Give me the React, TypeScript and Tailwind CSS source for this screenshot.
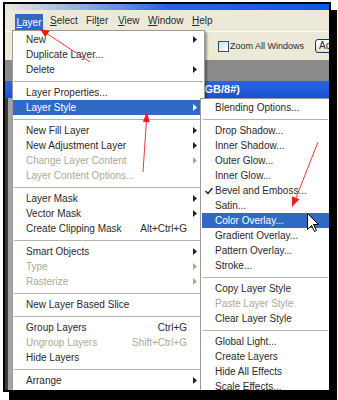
import React from "react";

const FONT = { fontFamily: '"Liberation Sans", Arial, sans-serif' };

type Item = {
  t?: string;
  sc?: string;
  sub?: boolean;
  dis?: boolean;
  hi?: boolean;
  sep?: boolean;
  check?: boolean;
};

const mainItems: Item[] = [
  { t: "New", sub: true },
  { t: "Duplicate Layer..." },
  { t: "Delete", sub: true },
  { sep: true },
  { t: "Layer Properties..." },
  { t: "Layer Style", sub: true, hi: true },
  { sep: true },
  { t: "New Fill Layer", sub: true },
  { t: "New Adjustment Layer", sub: true },
  { t: "Change Layer Content", sub: true, dis: true },
  { t: "Layer Content Options...", dis: true },
  { sep: true },
  { t: "Layer Mask", sub: true },
  { t: "Vector Mask", sub: true },
  { t: "Create Clipping Mask", sc: "Alt+Ctrl+G" },
  { sep: true },
  { t: "Smart Objects", sub: true },
  { t: "Type", sub: true, dis: true },
  { t: "Rasterize", sub: true, dis: true },
  { sep: true },
  { t: "New Layer Based Slice" },
  { sep: true },
  { t: "Group Layers", sc: "Ctrl+G" },
  { t: "Ungroup Layers", sc: "Shift+Ctrl+G", dis: true },
  { t: "Hide Layers" },
  { sep: true },
  { t: "Arrange", sub: true },
  { t: "Align Layers To Selection", sub: true },
];

const subItems: Item[] = [
  { t: "Blending Options..." },
  { sep: true },
  { t: "Drop Shadow..." },
  { t: "Inner Shadow..." },
  { t: "Outer Glow..." },
  { t: "Inner Glow..." },
  { t: "Bevel and Emboss...", check: true },
  { t: "Satin..." },
  { t: "Color Overlay...", hi: true },
  { t: "Gradient Overlay..." },
  { t: "Pattern Overlay..." },
  { t: "Stroke..." },
  { sep: true },
  { t: "Copy Layer Style" },
  { t: "Paste Layer Style", dis: true },
  { t: "Clear Layer Style" },
  { sep: true },
  { t: "Global Light..." },
  { t: "Create Layers" },
  { t: "Hide All Effects" },
  { t: "Scale Effects..." },
];

function Arrow({ color }: { color: string }) {
  return (
    <svg width="4" height="7" viewBox="0 0 4 7" className="block">
      <path d="M0 0 L4 3.5 L0 7 Z" fill={color} />
    </svg>
  );
}

function MainRow({ it }: { it: Item }) {
  if (it.sep)
    return (
      <div className="h-[8px] flex items-center px-[1px]">
        <div className="h-px w-full bg-[#b5b2a8]" />
      </div>
    );
  const txt = it.hi ? "text-white" : it.dis ? "text-[#aca899]" : "text-[#2a2a2a]";
  const arrowColor = it.hi ? "#ffffff" : it.dis ? "#aca899" : "#222222";
  return (
    <div
      className={`h-[15px] flex items-center pl-[13px] pr-[7px] text-[10px] leading-none whitespace-nowrap ${txt} ${
        it.hi ? "bg-[#316ac5]" : ""
      }`}
    >
      <span className="flex-1">{it.t}</span>
      {it.sc && <span>{it.sc}</span>}
      <span className="ml-[6px] w-[4px] flex items-center">
        {it.sub && <Arrow color={arrowColor} />}
      </span>
    </div>
  );
}

function SubRow({ it }: { it: Item }) {
  if (it.sep)
    return (
      <div className="h-[8px] flex items-center pl-[2px] pr-[2px]">
        <div className="h-px w-full bg-[#b5b2a8]" />
      </div>
    );
  const txt = it.hi ? "text-white" : it.dis ? "text-[#aca899]" : "text-[#2a2a2a]";
  return (
    <div
      className={`relative h-[15px] flex items-center pl-[14px] text-[10px] leading-none whitespace-nowrap ${txt} ${
        it.hi ? "bg-[#316ac5] ml-[1px]" : ""
      }`}
    >
      {it.check && (
        <svg width="8" height="8" viewBox="0 0 8 8" className="absolute left-[4px] top-[4px]">
          <path d="M0.5 4 L3 6.5 L7.5 1" stroke="#222" strokeWidth="1.5" fill="none" />
        </svg>
      )}
      <span className={it.hi ? "-ml-[1px]" : ""}>{it.t}</span>
    </div>
  );
}

export default function App() {
  return (
    <div className="relative w-[338px] h-[400px] bg-white overflow-hidden pt-[2px] pl-[3px]" style={FONT}>
      <div className="relative w-[328px] h-[390px] border-2 border-black shadow-[6px_8px_0_0_#000] bg-[#808080]">
        <div className="absolute inset-0 overflow-hidden flex flex-col">
          {/* app title strip */}
          <div className="h-[6px] shrink-0 bg-gradient-to-r from-[#ece9d8] via-[#2a62e2] to-[#0a58e6]" />
          {/* menu bar */}
          <div className="h-[21px] shrink-0 bg-[#ece9d8] flex items-center pl-[10px] text-[10px] text-[#2a2a2a] leading-none">
            <div className="w-[28px] h-[17px] mt-[4px] self-start bg-[#316ac5] text-white flex items-center justify-center">
              <span>
                <span className="underline">L</span>ayer
              </span>
            </div>
            <span className="ml-[7px] w-[36px]">
              <span className="underline">S</span>elect
            </span>
            <span className="w-[32px]">
              Fil<span className="underline">t</span>er
            </span>
            <span className="w-[30px]">
              <span className="underline">V</span>iew
            </span>
            <span className="w-[44px]">
              <span className="underline">W</span>indow
            </span>
            <span>
              <span className="underline">H</span>elp
            </span>
          </div>
          {/* options bar */}
          <div className="h-[29px] shrink-0 bg-[#ece9d8] border-t border-[#fbfaf5] flex items-center pl-[213px] text-[9px] text-[#2a2a2a] leading-none overflow-hidden">
            <div className="shrink-0 w-[11px] h-[11px] border border-[#1c5180] bg-gradient-to-br from-[#dcdcd6] to-white" />
            <span className="shrink-0 ml-[1px] whitespace-nowrap">Zoom All Windows</span>
            <div className="shrink-0 ml-[11px] h-[14px] pl-[3px] pr-[6px] rounded-[3px] border border-[#003c74] bg-gradient-to-b from-white to-[#e3e2da] flex items-center whitespace-nowrap text-[10px]">
              Actual
            </div>
          </div>
          {/* gray band */}
          <div className="h-[21px] shrink-0 bg-[#8a8a8a]" />
          {/* document title bar */}
          <div className="h-[17px] shrink-0 bg-gradient-to-b from-[#2a66e0] to-[#1751d4] flex items-center">
            <div className="w-[235px] flex justify-end overflow-hidden text-[11px] font-bold text-white leading-none whitespace-nowrap">
              Untitled-1 @ 100% (Layer 1, RGB/8#)
            </div>
          </div>
          {/* workspace */}
          <div className="flex-1 flex bg-[#9a9a9a]">
            <div className="w-[3px] bg-[#3c3c3c]" />
            <div className="w-[4px] bg-[#a4a4a4]" />
            <div className="flex-1 bg-[#808080]" />
          </div>

          {/* main Layer menu */}
          <div className="absolute left-[7px] top-[26px] w-[193px] bg-white border border-[#9d9a90] pt-[1px] pb-[2px] shadow-[2px_2px_2px_rgba(0,0,0,0.35)]">
            {mainItems.map((it, i) => (
              <MainRow key={i} it={it} />
            ))}
          </div>

          {/* Layer Style submenu */}
          <div className="absolute left-[195px] top-[94px] w-[131px] bg-white border border-[#9d9a90] pt-[1px] pb-[2px] shadow-[2px_2px_2px_rgba(0,0,0,0.35)]">
            {subItems.map((it, i) => (
              <SubRow key={i} it={it} />
            ))}
          </div>
        </div>
      </div>

      {/* annotations: red arrows */}
      <svg className="absolute left-0 top-0 pointer-events-none" width="338" height="400" viewBox="0 0 338 400">
        <line x1="90" y1="62" x2="46" y2="33" stroke="#f03a3a" strokeWidth="1" />
        <polygon points="40,29 49.7,30.7 45.3,37.3" fill="#ee1c1c" />
        <line x1="143" y1="172" x2="146.5" y2="120" stroke="#f03a3a" strokeWidth="1" />
        <polygon points="147,112 149.8,122.2 142.8,121.8" fill="#ee1c1c" />
        <line x1="318" y1="142" x2="296" y2="198" stroke="#f03a3a" strokeWidth="1" />
        <polygon points="292,207 299.4,199.2 292,196.2" fill="#ee1c1c" />
        {/* mouse cursor */}
        <path
          d="M307.5 213.5 L307.5 229.5 L311.5 225.5 L314.5 231.5 L316.5 230.5 L313.5 224.5 L318.5 224.5 Z"
          fill="#ffffff"
          stroke="#000000"
          strokeWidth="1"
          strokeLinejoin="miter"
        />
      </svg>
    </div>
  );
}
